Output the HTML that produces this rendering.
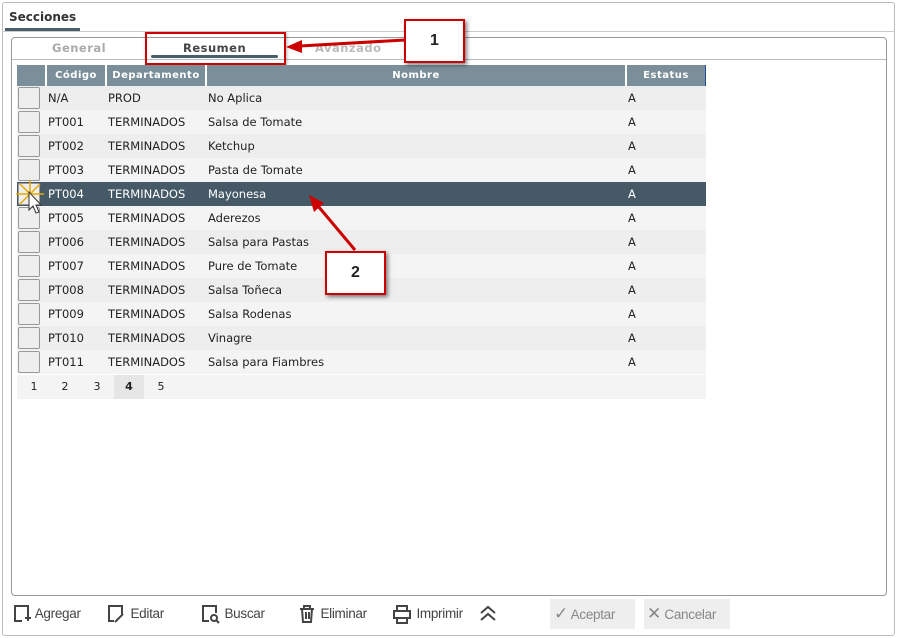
<!DOCTYPE html>
<html><head><meta charset="utf-8"><style>
*{box-sizing:border-box;margin:0;padding:0}
body{width:898px;height:638px;background:#fff;font-family:"DejaVu Sans","Liberation Sans",sans-serif;font-size:11.5px;color:#222;position:relative;overflow:hidden}
.abs{position:absolute}
.outer{left:2px;top:2px;width:893px;height:634px;border:1px solid #bbb;border-radius:3px}
.inner{left:11px;top:37px;width:876px;height:559px;border:1px solid #999;border-radius:4px}
table{position:absolute;left:17px;top:65px;border-collapse:collapse;width:689px}
th{background:#7a8f99;color:#fff;font-weight:bold;font-size:10px;height:21px;border-right:2px solid #fff;letter-spacing:.5px}
th:last-child{border-right:1px solid #1f4f8f}
td{height:24px;padding-left:2px;white-space:nowrap}
tr.o td{background:#eee}tr.e td{background:#f4f4f4}
tr.s td{background:#455a66;color:#fff}
.cb{width:29px;padding:0}
.cb div{width:22px;height:22px;border:1px solid #999;border-radius:2px;background:#eee;margin-left:1px}
.pager{left:17px;top:374px;width:689px;height:24px;background:#f4f4f4}
.pager span{position:absolute;top:0;height:24px;line-height:24px;width:30px;text-align:center;font-size:11px}
.tb{top:604px;font-size:13.5px;color:#444;font-family:"Liberation Sans",sans-serif;height:20px;line-height:20px;letter-spacing:-.3px}
.box{border:2px solid #c00;box-shadow:2px 2px 4px rgba(0,0,0,.5);background:#fff;font:bold 16px "Liberation Sans",sans-serif;text-align:center}
</style></head><body>
<div class="abs outer"></div>
<div class="abs" style="left:9px;top:10px;font-weight:bold;font-size:12px;color:#333">Secciones</div>
<div class="abs" style="left:5px;top:28px;width:75px;height:3px;background:#4a5f6a"></div>
<div class="abs" style="left:2px;top:31px;width:893px;height:1px;background:#ccc"></div>
<div class="abs inner"></div>
<div class="abs" style="left:12px;top:59px;width:874px;height:1px;background:#bbb"></div>
<div class="abs" style="left:52px;top:41px;font-weight:bold;color:#aaa;letter-spacing:.5px">General</div>
<div class="abs" style="left:183px;top:41px;font-weight:bold;color:#444;letter-spacing:.5px">Resumen</div>
<div class="abs" style="left:151px;top:55px;width:127px;height:3px;background:#4a5f6a;border-radius:2px"></div>
<div class="abs" style="left:315px;top:41px;font-weight:bold;color:#bbb;letter-spacing:.5px">Avanzado</div>
<div class="abs" style="left:145px;top:32px;width:141px;height:33px;border:2px solid #c00;box-shadow:1px 1px 3px rgba(0,0,0,.3)"></div>
<table>
<tr><th style="width:29px"></th><th style="width:60px">Código</th><th style="width:100px">Departamento</th><th style="width:420px">Nombre</th><th>Estatus</th></tr>
<tr class="o"><td class="cb"><div></div></td><td>N/A</td><td>PROD</td><td>No Aplica</td><td>A</td></tr>
<tr class="e"><td class="cb"><div></div></td><td>PT001</td><td>TERMINADOS</td><td>Salsa de Tomate</td><td>A</td></tr>
<tr class="o"><td class="cb"><div></div></td><td>PT002</td><td>TERMINADOS</td><td>Ketchup</td><td>A</td></tr>
<tr class="e"><td class="cb"><div></div></td><td>PT003</td><td>TERMINADOS</td><td>Pasta de Tomate</td><td>A</td></tr>
<tr class="s"><td class="cb"><div style="background:#eee"></div></td><td>PT004</td><td>TERMINADOS</td><td>Mayonesa</td><td>A</td></tr>
<tr class="e"><td class="cb"><div></div></td><td>PT005</td><td>TERMINADOS</td><td>Aderezos</td><td>A</td></tr>
<tr class="o"><td class="cb"><div></div></td><td>PT006</td><td>TERMINADOS</td><td>Salsa para Pastas</td><td>A</td></tr>
<tr class="e"><td class="cb"><div></div></td><td>PT007</td><td>TERMINADOS</td><td>Pure de Tomate</td><td>A</td></tr>
<tr class="o"><td class="cb"><div></div></td><td>PT008</td><td>TERMINADOS</td><td>Salsa Toñeca</td><td>A</td></tr>
<tr class="e"><td class="cb"><div></div></td><td>PT009</td><td>TERMINADOS</td><td>Salsa Rodenas</td><td>A</td></tr>
<tr class="o"><td class="cb"><div></div></td><td>PT010</td><td>TERMINADOS</td><td>Vinagre</td><td>A</td></tr>
<tr class="e"><td class="cb"><div></div></td><td>PT011</td><td>TERMINADOS</td><td>Salsa para Fiambres</td><td>A</td></tr>
</table>
<div class="abs pager" style="top:375px"><span style="left:2px">1</span><span style="left:33px">2</span><span style="left:65px">3</span><span style="left:97px;background:#e6e6e6;font-weight:bold">4</span><span style="left:129px">5</span></div>
<svg class="abs" style="left:16px;top:180px" width="34" height="40">
<g stroke="#e8a800" stroke-width="1.5"><line x1="4" y1="4" x2="24" y2="24"/><line x1="24" y1="4" x2="4" y2="24"/><line x1="14" y1="0" x2="14" y2="28"/><line x1="0" y1="14" x2="28" y2="14"/></g>
<path d="M13 12 L13 30 L17 26 L20 33 L23 32 L20 25 L25 25 Z" fill="#fff" stroke="#333" stroke-width="1"/></svg>
<svg class="abs" style="left:0;top:0" width="898" height="638">
<g stroke="#c00" stroke-width="3" fill="#c00">
<line x1="405" y1="40" x2="300" y2="46"/><polygon points="286,47 302,40 302,53" stroke="none"/>
<line x1="355" y1="250" x2="318" y2="206"/><polygon points="309,195 324,203 314,212" stroke="none"/></g></svg>
<div class="abs box" style="left:404px;top:19px;width:61px;height:44px;line-height:40px">1</div>
<div class="abs box" style="left:325px;top:251px;width:61px;height:44px;line-height:40px">2</div>
<div class="abs tb" style="left:12px"><svg width="20" height="20" style="vertical-align:middle" fill="none" stroke="#444" stroke-width="2"><path d="M10 17H3V2h13v9M13 14h6M16 11v6"/></svg> Agregar</div>
<div class="abs tb" style="left:107px"><svg width="20" height="20" style="vertical-align:middle" fill="none" stroke="#444" stroke-width="2"><path d="M7 17H2V2h13v8M8 18l8-8"/></svg> Editar</div>
<div class="abs tb" style="left:201px"><svg width="20" height="20" style="vertical-align:middle" fill="none" stroke="#444" stroke-width="2"><path d="M8 17H2V2h13v7"/><circle cx="13" cy="14" r="3"/><path d="M15 16l3 3"/></svg> Buscar</div>
<div class="abs tb" style="left:297px"><svg width="20" height="20" style="vertical-align:middle" fill="none" stroke="#444" stroke-width="2"><path d="M3 5h14M7 5V2h6v3M5 5l1 13h8l1-13M9 8v7M12 8v7"/></svg> Eliminar</div>
<div class="abs tb" style="left:391px"><svg width="22" height="20" style="vertical-align:middle" fill="none" stroke="#444" stroke-width="2"><path d="M6 6V2h10v4M3 7h16v7H3zM6 14v5h10v-5"/></svg> Imprimir</div>
<div class="abs tb" style="left:478px"><svg width="20" height="20" style="vertical-align:middle" fill="none" stroke="#444" stroke-width="2"><path d="M3 9l7-6 7 6M3 16l7-6 7 6"/></svg></div>
<div class="abs tb" style="left:550px;width:85px;height:30px;top:599px;line-height:30px;background:#eee;color:#888;padding-left:4px"><span style="font-size:17px">✓</span> Aceptar</div>
<div class="abs tb" style="left:644px;width:86px;height:30px;top:599px;line-height:30px;background:#eee;color:#888;padding-left:3px"><span style="font-size:17px">✕</span> Cancelar</div>
</body></html>
